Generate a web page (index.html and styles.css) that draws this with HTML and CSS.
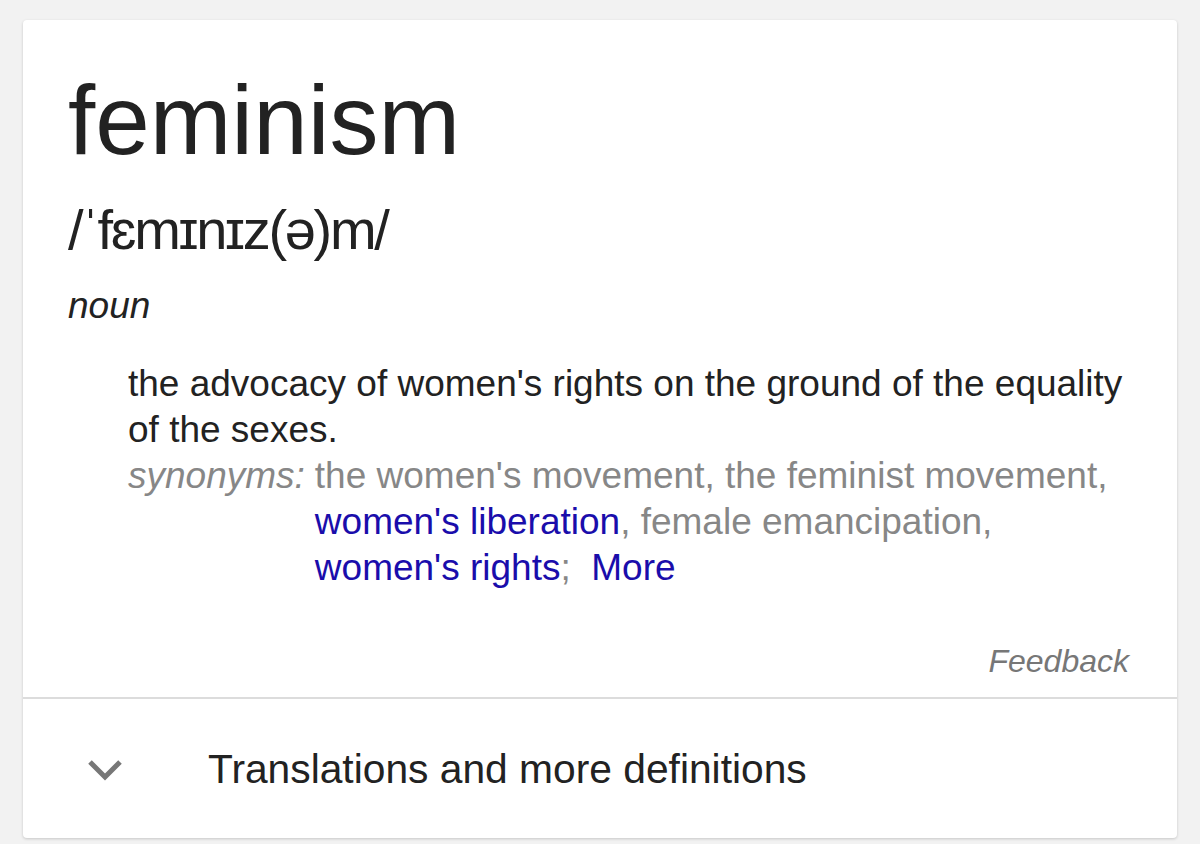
FILE: index.html
```html
<!DOCTYPE html>
<html lang="en">
<head>
<meta charset="utf-8">
<title>feminism</title>
<link rel="stylesheet" href="styles.css">
</head>
<body>
<div class="card">
  <div class="main">
    <h1 class="word">feminism</h1>
    <div class="pron">/ˈfɛmɪnɪz(ə)m/</div>
    <div class="pos">noun</div>
    <div class="sense">
      <div class="def">the advocacy of women's rights on the ground of the equality of the sexes.</div>
      <div class="syn">
        <span class="syn-label">synonyms:</span>
        <span class="syn-list">the women's movement, the feminist movement, <a class="link">women's liberation</a>, female emancipation, <a class="link">women's rights</a>;&nbsp; <a class="link">More</a></span>
      </div>
    </div>
    <div class="feedback">Feedback</div>
  </div>
  <div class="more-row">
    <svg class="chev" width="36" height="24" viewBox="0 0 36 24" aria-hidden="true">
      <path d="M3 5 L18 20 L33 5" fill="none" stroke="#777" stroke-width="5"/>
    </svg>
    <span class="more-text">Translations and more definitions</span>
  </div>
</div>
</body>
</html>
```

FILE: styles.css
```css
html, body {
  margin: 0;
  padding: 0;
}
body {
  background: #f2f2f2;
  font-family: "Liberation Sans", Arial, Helvetica, sans-serif;
  color: #222;
  padding: 20px 23px 0 23px;
  height: 844px;
  box-sizing: border-box;
  overflow: hidden;
}
.card {
  width: 1154px;
  height: 818px;
  background: #fff;
  border-radius: 4px;
  box-shadow: 0 1px 3px rgba(0,0,0,0.18);
  display: flex;
  flex-direction: column;
  box-sizing: border-box;
}
.main {
  padding: 50px 48px 16px 45px;
}
.word {
  margin: 0;
  font-size: 98px;
  line-height: 100px;
  font-weight: normal;
  color: #222;
}
.pron {
  margin-top: 28px;
  font-size: 56px;
  line-height: 64px;
  letter-spacing: -2.3px;
  color: #222;
}
.pos {
  margin-top: 21px;
  font-size: 37px;
  line-height: 46px;
  font-style: italic;
  color: #222;
}
.sense {
  margin: 32px 0 0 60px;
  font-size: 37px;
  line-height: 46px;
}
.def {
  color: #222;
}
.syn {
  display: grid;
  grid-template-columns: auto 1fr;
  column-gap: 10px;
  color: #878787;
}
.syn-label {
  font-style: italic;
}
.link {
  color: #1a0dab;
  text-decoration: none;
}
.feedback {
  margin-top: 50px;
  text-align: right;
  font-size: 32px;
  line-height: 40px;
  font-style: italic;
  color: #777;
}
.more-row {
  flex: 1;
  border-top: 2px solid #dcdcdc;
  display: flex;
  align-items: center;
  padding-left: 64px;
}
.chev {
  display: block;
  flex: none;
  margin-right: 85px;
}
.more-text {
  font-size: 40.75px;
  line-height: 48px;
  color: #222;
}
```
